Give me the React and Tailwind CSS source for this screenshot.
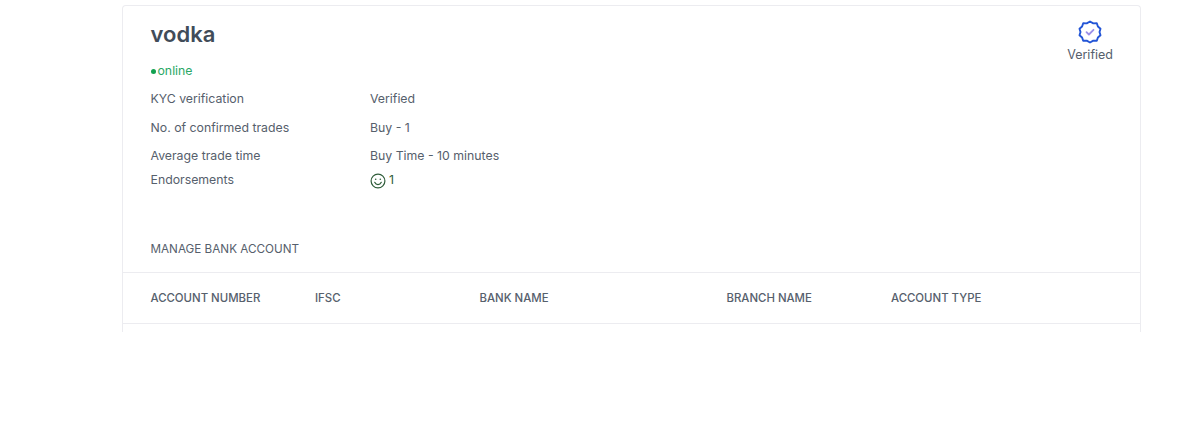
import React from 'react';

const rows = [
  { label: 'KYC verification', value: 'Verified', height: 'h-[29px]' },
  { label: 'No. of confirmed trades', value: 'Buy - 1', height: 'h-[28px]' },
  { label: 'Average trade time', value: 'Buy Time - 10 minutes', height: 'h-[29px]' },
];

const columns = ['ACCOUNT NUMBER', 'IFSC', 'BANK NAME', 'BRANCH NAME', 'ACCOUNT TYPE'];

// Badge outline with the small check inside
const VerifiedBadge = () => (
  <svg width="24" height="24" viewBox="0 0 24 24" fill="none">
    <path
      d="M12 1.500l3.300 1.900 3.500-.2 1.100 3.300 2.600 2.300-1 3.200 1 3.200-2.600 2.300-1.100 3.300-3.500-.2-3.300 1.900-3.300-1.900-3.500.2-1.100-3.300-2.600-2.300 1-3.200-1-3.200 2.600-2.300 1.100-3.300 3.500.2z"
      stroke="#2355d6"
      strokeWidth="1.900"
      strokeLinejoin="round"
    />
    <path d="M8.500 12.200l2.400 2.300 4.600-4.700" stroke="#9b8fe8" strokeWidth="1.800" strokeLinecap="round" strokeLinejoin="round" />
  </svg>
);

const Smiley = () => (
  <svg width="16" height="16" viewBox="0 0 16 16" fill="none" stroke="#2f5d3a" strokeWidth="1.200">
    <circle cx="8" cy="8" r="6.900" />
    <circle cx="5.700" cy="6.200" r="0.800" fill="#2f5d3a" stroke="none" />
    <circle cx="10.300" cy="6.200" r="0.800" fill="#2f5d3a" stroke="none" />
    <path d="M4.700 9.300c.8 1.700 2 2.300 3.300 2.300s2.500-.6 3.300-2.300" strokeLinecap="round" />
  </svg>
);

export default function App() {
  return (
    <div className="h-[432px] bg-white pt-[5px] pl-[122px] pr-[59px] font-['Inter',sans-serif] text-[12.300px] text-[#56606c]">
      <div className="h-[327px] rounded-t border border-b-0 border-[#ececf0]">
        <div className="relative h-[267px] border-b border-[#ececf0] pl-[27.500px]">
          <div className="absolute right-[27px] top-[14px] flex flex-col items-center">
            <VerifiedBadge />
            <span className="mt-[2px] text-[12.500px] leading-[18px]">Verified</span>
          </div>
          <h1 className="pt-[14px] text-[22px] font-semibold leading-[29px] text-[#414c59]">vodka</h1>
          <div className="mt-[13px] flex h-[18px] items-center text-[#2aa866]">
            <span className="mr-[2px] h-[5px] w-[5px] rounded-full bg-[#12a150]" />
            online
          </div>
          <div className="mt-[5px]">
            {rows.map((row) => (
              <div key={row.label} className={`flex items-center ${row.height}`}>
                <span className="w-[219.500px]">{row.label}</span>
                <span>{row.value}</span>
              </div>
            ))}
            <div className="flex h-[19px] items-center">
              <span className="w-[219.500px]">Endorsements</span>
              <span className="flex items-center gap-[3px]">
                <Smiley />
                <span className="text-[#2f5d3a]">1</span>
              </span>
            </div>
          </div>
          <div className="mt-[50px] text-[11.700px] leading-[18px]">MANAGE BANK ACCOUNT</div>
        </div>
        <div className="grid h-[51px] grid-cols-[164.500px_164.500px_247px_164.500px_1fr] items-center border-b border-[#ececf0] pl-[27.500px] pt-[1px] text-[11.400px] font-medium">
          {columns.map((col) => (
            <span key={col}>{col}</span>
          ))}
        </div>
      </div>
    </div>
  );
}
